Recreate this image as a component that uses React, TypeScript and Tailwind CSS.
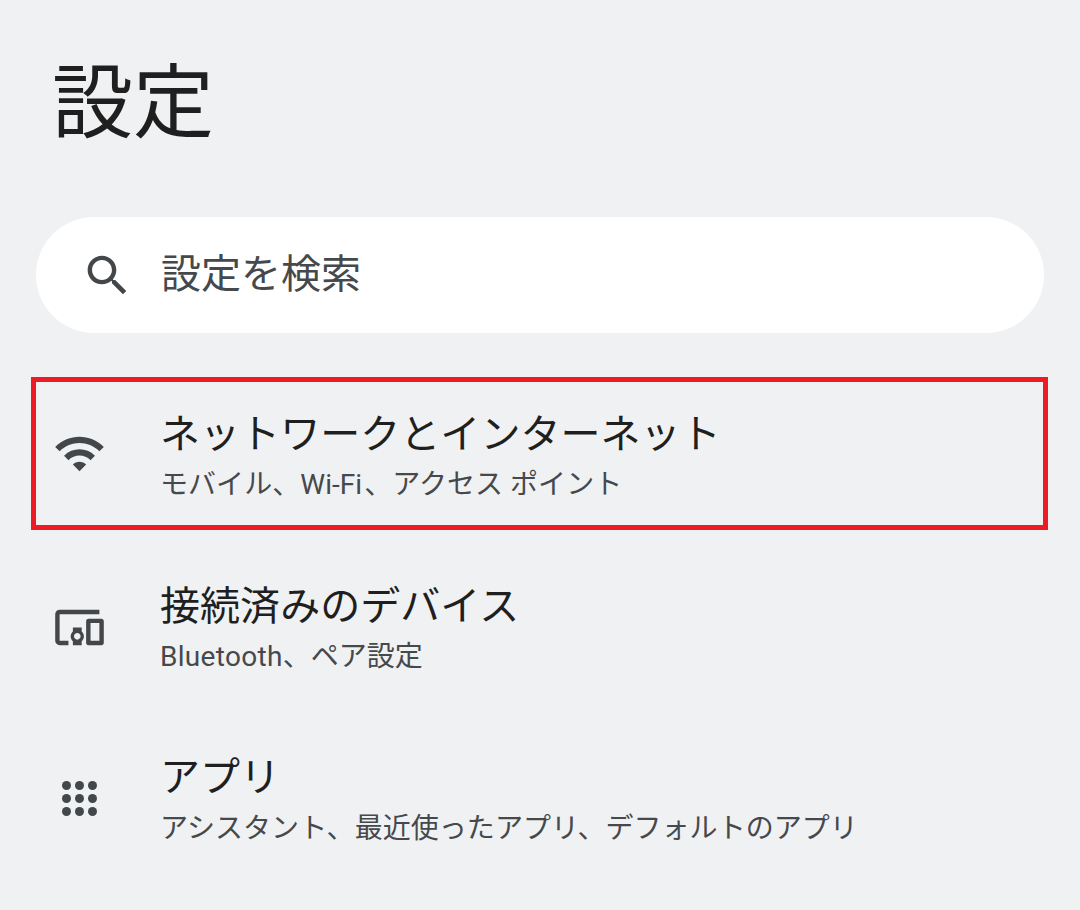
import React from 'react';

const font = '[font-family:Roboto,"Noto_Sans_CJK_JP",sans-serif]';

const WifiIcon = () => (
  <svg width="53" height="53" viewBox="0 0 24 24" fill="currentColor">
    <path d="M1 9l2 2c4.97-4.97 13.03-4.97 18 0l2-2C16.93 2.93 7.08 2.93 1 9zm8 8l3 3 3-3c-1.65-1.66-4.34-1.66-6 0zm-4-4l2 2c2.76-2.76 7.24-2.76 10 0l2-2C15.14 9.14 8.87 9.14 5 13z" />
  </svg>
);

const DevicesIcon = () => (
  <svg width="53" height="53" viewBox="0 0 24 24" fill="currentColor">
    <path d="M3 6h18V4H3c-1.1 0-2 .9-2 2v12c0 1.1.9 2 2 2h4v-2H3V6zm10 6H9v1.78c-.61.55-1 1.33-1 2.22s.39 1.67 1 2.22V20h4v-1.78c.61-.55 1-1.34 1-2.22s-.39-1.67-1-2.22V12zm-2 5.5c-.83 0-1.5-.67-1.5-1.5s.67-1.5 1.5-1.5 1.5.67 1.5 1.5-.67 1.5-1.5 1.5zM22 8h-6c-.5 0-1 .5-1 1v10c0 .5.5 1 1 1h6c.5 0 1-.5 1-1V9c0-.5-.5-1-1-1zm-1 10h-4v-8h4v8z" />
  </svg>
);

const AppsIcon = () => (
  <svg width="53" height="53" viewBox="0 0 53 53" fill="currentColor">
    {[13.5, 26.5, 39.5].map((y) =>
      [13.5, 26.5, 39.5].map((x) => <circle key={`${x}-${y}`} cx={x} cy={y} r="4.5" />)
    )}
  </svg>
);

const SearchIcon = () => (
  <svg width="53" height="53" viewBox="0 0 24 24" fill="currentColor">
    <path d="M15.5 14h-.79l-.28-.27C15.41 12.59 16 11.11 16 9.5 16 5.91 13.09 3 9.5 3S3 5.91 3 9.5 5.91 16 9.5 16c1.61 0 3.09-.59 4.23-1.57l.27.28v.79l5 4.99L20.49 19l-4.99-5zm-6 0C7.01 14 5 11.99 5 9.5S7.01 5 9.5 5 14 7.01 14 9.5 11.99 14 9.5 14z" />
  </svg>
);

const rows = [
  {
    icon: <WifiIcon />,
    iconPad: 'pt-0',
    textPad: 'pt-[4px]',
    subGap: 'mt-[2px]',
    title: 'ネットワークとインターネット',
    sub: <>モバイル、<span className="mr-[2px]">Wi-Fi</span>、アクセス ポイント</>,
    box: 'border-[#ed1c24]',
  },
  {
    icon: <DevicesIcon />,
    iconPad: 'pt-[4px]',
    textPad: 'pt-[4px]',
    subGap: 'mt-[2px]',
    title: '接続済みのデバイス',
    sub: <><span className="tracking-[0.3px]">Bluetooth</span>、ペア設定</>,
    box: 'border-transparent',
  },
  {
    icon: <AppsIcon />,
    iconPad: 'pt-[2px]',
    textPad: 'pt-[3px]',
    subGap: 'mt-[3px]',
    title: 'アプリ',
    sub: 'アシスタント、最近使ったアプリ、デフォルトのアプリ',
    box: 'border-transparent',
  },
];

export default function App() {
  return (
    <div className={`h-[910px] w-[1080px] overflow-hidden bg-[#f0f1f3] ${font}`}>
      <h1 className="h-[217px] pl-[52px] pt-[47px] text-[81px] leading-[114px] font-normal text-[#1f1f1f]">設定</h1>

      <div className="mx-[36px] flex h-[116px] items-center rounded-full bg-white pl-[45px] text-[#44474a]">
        <SearchIcon />
        <span className="ml-[27px] text-[40px] leading-none text-[#46494c]">設定を検索</span>
      </div>

      <div className="ml-[31px] mr-[32px] mt-[44px] flex flex-col gap-[19px]">
        {rows.map((row) => (
          <div key={row.title} className={`flex h-[153px] items-center border-[5px] pl-[17px] ${row.box}`}>
            <div className={`flex w-[107px] shrink-0 text-[#44474a] ${row.iconPad}`}>{row.icon}</div>
            <div className={`flex flex-col ${row.textPad}`}>
              <span className="text-[40px] leading-[56px] tracking-[0.05px] text-[#1f1f1f]">{row.title}</span>
              <span className={`text-[28px] leading-[40px] tracking-[0.05px] text-[#46494c] ${row.subGap}`}>{row.sub}</span>
            </div>
          </div>
        ))}
      </div>
    </div>
  );
}
